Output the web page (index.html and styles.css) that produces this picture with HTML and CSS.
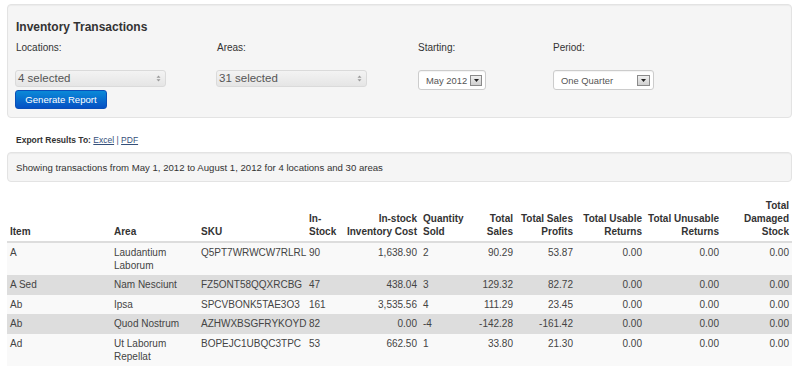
FILE: index.html
```html
<!DOCTYPE html>
<html>
<head>
<meta charset="utf-8">
<link rel="stylesheet" href="styles.css">
</head>
<body>
<div class="page">
  <div class="well filters">
    <h1 class="title">Inventory Transactions</h1>
    <div class="fields">
      <div class="field f-wide">
        <div class="lbl">Locations:</div>
        <div class="msel"><span>4 selected</span><svg class="updown" width="5" height="7" viewBox="0 0 5 7"><path d="M2.5 0.5 L4.5 2.8 L0.5 2.8 Z M0.5 4.2 L4.5 4.2 L2.5 6.5 Z" fill="#9a9a9a"/></svg></div>
        <button class="btn">Generate Report</button>
      </div>
      <div class="field f-wide">
        <div class="lbl">Areas:</div>
        <div class="msel"><span>31 selected</span><svg class="updown" width="5" height="7" viewBox="0 0 5 7"><path d="M2.5 0.5 L4.5 2.8 L0.5 2.8 Z M0.5 4.2 L4.5 4.2 L2.5 6.5 Z" fill="#9a9a9a"/></svg></div>
      </div>
      <div class="field f-mid">
        <div class="lbl">Starting:</div>
        <div class="dsel dsel-start"><span>May 2012</span><span class="dbox"><svg width="5" height="3" viewBox="0 0 5 3"><path d="M0 0 L5 0 L2.5 3 Z" fill="#222"/></svg></span></div>
      </div>
      <div class="field">
        <div class="lbl">Period:</div>
        <div class="dsel dsel-period"><span>One Quarter</span><span class="dbox"><svg width="5" height="3" viewBox="0 0 5 3"><path d="M0 0 L5 0 L2.5 3 Z" fill="#222"/></svg></span></div>
      </div>
    </div>
  </div>

  <div class="export"><b>Export Results To:</b> <a href="#">Excel</a> <span class="sep">|</span> <a href="#">PDF</a></div>

  <div class="well summary">Showing transactions from May 1, 2012 to August 1, 2012 for 4 locations and 30 areas</div>

  <table class="grid">
    <colgroup>
      <col style="width:104px"><col style="width:87px"><col style="width:108px"><col style="width:36px"><col style="width:78px"><col style="width:50px"><col style="width:46px"><col style="width:60px"><col style="width:69px"><col style="width:77px"><col style="width:70px">
    </colgroup>
    <thead>
      <tr>
        <th>Item</th><th>Area</th><th>SKU</th><th>In-<br>Stock</th><th class="r">In-stock<br>Inventory Cost</th><th>Quantity<br>Sold</th><th class="r">Total<br>Sales</th><th class="r">Total Sales<br>Profits</th><th class="r">Total Usable<br>Returns</th><th class="r">Total Unusable<br>Returns</th><th class="r">Total<br>Damaged<br>Stock</th>
      </tr>
    </thead>
    <tbody>
      <tr><td>A</td><td>Laudantium<br>Laborum</td><td>Q5PT7WRWCW7RLRL</td><td>90</td><td class="r">1,638.90</td><td>2</td><td class="r">90.29</td><td class="r">53.87</td><td class="r">0.00</td><td class="r">0.00</td><td class="r">0.00</td></tr>
      <tr><td>A Sed</td><td>Nam Nesciunt</td><td>FZ5ONT58QQXRCBG</td><td>47</td><td class="r">438.04</td><td>3</td><td class="r">129.32</td><td class="r">82.72</td><td class="r">0.00</td><td class="r">0.00</td><td class="r">0.00</td></tr>
      <tr><td>Ab</td><td>Ipsa</td><td>SPCVBONK5TAE3O3</td><td>161</td><td class="r">3,535.56</td><td>4</td><td class="r">111.29</td><td class="r">23.45</td><td class="r">0.00</td><td class="r">0.00</td><td class="r">0.00</td></tr>
      <tr><td>Ab</td><td>Quod Nostrum</td><td>AZHWXBSGFRYKOYD</td><td>82</td><td class="r">0.00</td><td>-4</td><td class="r">-142.28</td><td class="r">-161.42</td><td class="r">0.00</td><td class="r">0.00</td><td class="r">0.00</td></tr>
      <tr><td>Ad</td><td>Ut Laborum<br>Repellat</td><td>BOPEJC1UBQC3TPC</td><td>53</td><td class="r">662.50</td><td>1</td><td class="r">33.80</td><td class="r">21.30</td><td class="r">0.00</td><td class="r">0.00</td><td class="r">0.00</td></tr>
    </tbody>
  </table>
</div>
</body>
</html>
```

FILE: styles.css
```css
html, body {
  margin: 0;
  padding: 0;
  background: #ffffff;
}
body {
  font-family: "Liberation Sans", Arial, sans-serif;
  color: #333333;
  overflow: hidden;
}
.page {
  padding: 4px 8px 0 7px;
  width: 785px;
}
.well {
  background: #f5f5f5;
  border: 1px solid #e3e3e3;
  border-radius: 4px;
  box-shadow: inset 0 1px 1px rgba(0,0,0,0.04);
}
.filters {
  padding: 15px 8px 8px 8px;
}
.title {
  margin: 0 0 6px 0;
  font-size: 12px;
  line-height: 15px;
  font-weight: bold;
  color: #333;
}
.fields {
  display: flex;
  align-items: flex-start;
}
.field {
  display: flex;
  flex-direction: column;
  align-items: flex-start;
}
.f-wide { width: 201px; }
.f-mid { width: 135px; }
.lbl {
  font-size: 10px;
  line-height: 13px;
  color: #333;
  margin-bottom: 16px;
}
.msel {
  box-sizing: border-box;
  width: 151px;
  height: 17px;
  margin-left: -1px;
  border: 1px solid #dadada;
  border-radius: 3px;
  background: linear-gradient(#f3f3f3, #e5e5e5);
  display: flex;
  align-items: center;
  justify-content: space-between;
  padding: 0 4px 0 2px;
  font-size: 11.5px;
  color: #555;
}
.msel span { line-height: 15px; }
.updown { display: block; }
.btn {
  margin: 3px 0 0 -1px;
  box-sizing: border-box;
  width: 92px;
  height: 19px;
  padding: 0;
  border: 1px solid #0a4fb8;
  border-radius: 3px;
  background: linear-gradient(#0a8ad8, #0550c4);
  color: #fff;
  font-family: "Liberation Sans", Arial, sans-serif;
  font-size: 9.6px;
  line-height: 17px;
  text-align: center;
}
.dsel {
  box-sizing: border-box;
  height: 20px;
  border: 1px solid #cccccc;
  border-radius: 3px;
  background: #fff;
  display: flex;
  align-items: center;
  justify-content: space-between;
  font-size: 9.4px;
  color: #555;
  box-shadow: inset 0 1px 1px rgba(0,0,0,0.05);
}
.dsel-start {
  width: 68px;
  padding: 0 3px 0 7px;
}
.dsel-period {
  width: 101px;
  padding: 0 3px 0 7px;
}
.dbox {
  box-sizing: border-box;
  width: 12px;
  height: 11px;
  border: 1px solid #8a8a8a;
  background: linear-gradient(#f0f0f0, #cfcfcf);
  display: flex;
  align-items: center;
  justify-content: center;
}
.dsel-period .dbox { width: 13px; }
.dbox svg { display: block; }
.export {
  margin: 16px 0 0 9px;
  font-size: 8.5px;
  line-height: 13px;
  color: #333;
}
.export a, .export .sep {
  color: #34507a;
}
.summary {
  margin-top: 5px;
  padding: 7.5px 8px;
  font-size: 9.6px;
  line-height: 13px;
  color: #333;
}
.grid {
  margin-top: 14px;
  width: 785px;
  table-layout: fixed;
  border-collapse: collapse;
  font-size: 10px;
  color: #333;
}
.grid th, .grid td {
  padding: 2.6px 3px;
  text-align: left;
  line-height: 13.3px;
}
.grid th {
  font-weight: bold;
  vertical-align: bottom;
  border-bottom: 2px solid #dddddd;
  white-space: nowrap;
}
.grid td {
  vertical-align: top;
  border-top: 1px solid #dddddd;
  color: #444;
}
.grid tbody tr:first-child td { border-top: 0; }
.grid tbody tr:nth-child(odd) td { background: #f9f9f9; }
.grid tbody tr:nth-child(even) td { background: #dddddd; }
.grid .r { text-align: right; }
```
